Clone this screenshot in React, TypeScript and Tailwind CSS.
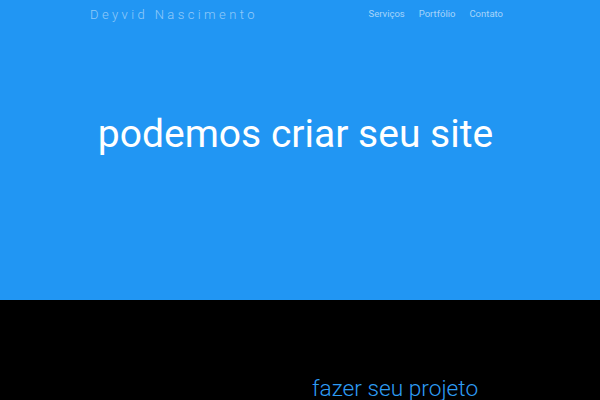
export default function App() {
  return (
    <div className="w-[600px] h-[400px] overflow-hidden font-['Roboto',sans-serif]">
      <section className="h-[300px] bg-[#2196f3] flex flex-col">
        <nav className="w-[420px] mx-auto flex items-center justify-between h-[28px]">
          <span className="text-[13px] font-light tracking-[3.4px] text-white/50 leading-none">
            Deyvid Nascimento
          </span>
          <ul className="flex gap-[14px] text-[9.5px] text-white/60 leading-none pr-[7px]">
            <li>Serviços</li>
            <li>Portfólio</li>
            <li>Contato</li>
          </ul>
        </nav>
        <h1 className="mt-[87px] pr-[9px] text-center text-white text-[39px] leading-none">
          podemos criar seu site
        </h1>
      </section>
      <section className="h-[100px] bg-black flex">
        <h2 className="mt-[78px] ml-[312px] text-[22.7px] font-light text-[#2e9cf4] leading-none">
          fazer seu projeto
        </h2>
      </section>
    </div>
  );
}
